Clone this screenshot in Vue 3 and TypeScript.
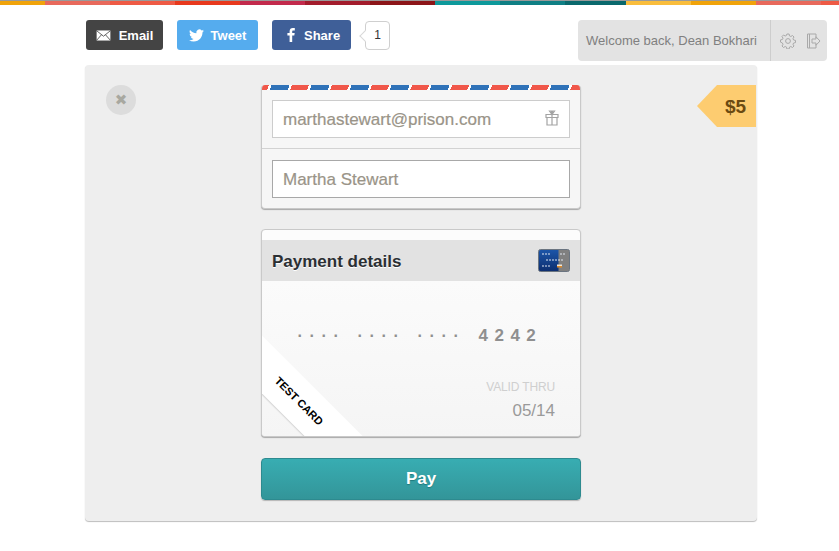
<script setup lang="ts">
const stripes = [
  { color: '#f0a30a', width: 45 },
  { color: '#e8695c', width: 65 },
  { color: '#ee5a45', width: 65 },
  { color: '#e8391d', width: 65 },
  { color: '#c22a4c', width: 65 },
  { color: '#a31c2c', width: 65 },
  { color: '#8c1518', width: 65 },
  { color: '#0e999b', width: 65 },
  { color: '#0f7f84', width: 65 },
  { color: '#0a686c', width: 61 },
  { color: '#f9bd3c', width: 65 },
  { color: '#f0a30a', width: 65 },
  { color: '#e8695c', width: 65 },
  { color: '#ee5a45', width: 18 }
]
const blocks = ['····', '····', '····']
</script>

<template>
  <div class="page">
    <div class="rainbow">
      <span v-for="(s, i) in stripes" :key="i" :style="{ background: s.color, width: s.width + 'px' }"></span>
    </div>

    <header class="top">
      <div class="social">
        <a class="btn email">
          <svg width="15" height="11" viewBox="0 0 16 12">
            <path d="M0.5 0.5h15v11h-15z" fill="#fff" />
            <path d="M0.5 0.8L8 6.8l7.5-6M0.5 11.2L5.8 5.2M15.5 11.2L10.2 5.2" fill="none" stroke="#444" stroke-width="0.9" />
          </svg>
          Email
        </a>
        <a class="btn tweet">
          <svg width="15" height="15" viewBox="0 0 24 24">
            <path fill="#fff" d="M23.95 4.57a10 10 0 0 1-2.82.77 4.96 4.96 0 0 0 2.16-2.72c-.95.55-2 .96-3.12 1.19a4.92 4.92 0 0 0-8.38 4.48C7.69 8.1 4.07 6.13 1.64 3.16a4.82 4.82 0 0 0-.67 2.48c0 1.71.87 3.21 2.19 4.1a4.9 4.9 0 0 1-2.23-.62v.06a4.92 4.92 0 0 0 3.95 4.83 5 5 0 0 1-2.21.08 4.94 4.94 0 0 0 4.6 3.42A9.87 9.87 0 0 1 0 19.54a14 14 0 0 0 7.56 2.21c9.05 0 14-7.5 14-13.98 0-.21 0-.42-.02-.63a9.94 9.94 0 0 0 2.41-2.57z" />
          </svg>
          Tweet
        </a>
        <a class="btn share">
          <svg width="8" height="14" viewBox="0 0 8 14">
            <path fill="#fff" d="M5.2 14V7.6h2.1l.4-2.500H5.2V3.600c0-.7.2-1.200 1.200-1.200h1.400V.1C7.5.1 6.700 0 5.800 0 3.900 0 2.600 1.200 2.600 3.300v1.800H.4v2.500h2.200V14z" />
          </svg>
          Share
        </a>
        <span class="count">1</span>
      </div>

      <div class="account">
        <span class="welcome">Welcome back, Dean Bokhari</span>
        <span class="actions">
          <svg width="16" height="16" viewBox="0 0 16 16" fill="none" stroke="#a9a9a9" stroke-width="1">
            <path d="M6.900 1h2.200l.4 1.900 1.300.6 1.700-1 1.500 1.500-1 1.700.6 1.300 1.900.4v2.200l-1.900.4-.6 1.300 1 1.700-1.500 1.500-1.700-1-1.300.6-.4 1.900H6.900l-.4-1.900-1.300-.6-1.700 1-1.500-1.500 1-1.700-.6-1.300L.5 9.100V6.900l1.900-.4.600-1.300-1-1.700 1.500-1.500 1.700 1 1.300-.6z" />
            <circle cx="8" cy="8" r="2.400" />
          </svg>
          <svg width="15" height="16" viewBox="0 0 15 16" fill="none" stroke="#a9a9a9" stroke-width="1">
            <path d="M10 5V1H1.500v14H10v-4M3.500 1v14" />
            <path d="M6 6h4V3.800L14 8l-4 4.200V10H6z" />
          </svg>
        </span>
      </div>
    </header>

    <main class="panel">
      <span class="close">&#10006;</span>
      <span class="price">$5</span>

      <section class="card contact">
        <div class="airmail"></div>
        <div class="contact-row first">
          <div class="field">
            <span>marthastewart@prison.com</span>
            <svg width="14" height="16" viewBox="0 0 14 16" fill="none" stroke="#a3a3a3" stroke-width="1.200">
              <path d="M1 4.500h12v3H1zM2 7.500h10V15H2zM7 4.500V15" />
              <path d="M7 4.500L4.500 1h2L7 4.500 7.500 1h2z" />
            </svg>
          </div>
        </div>
        <div class="contact-row">
          <div class="field dark"><span>Martha Stewart</span></div>
        </div>
      </section>

      <section class="card payment">
        <h2 class="pay-head">
          <span>Payment details</span>
          <svg width="32" height="23" viewBox="0 0 32 23">
            <defs>
              <linearGradient id="cardBlue" x1="0" y1="0" x2="0" y2="1">
                <stop offset="0" stop-color="#1c55a8" />
                <stop offset="1" stop-color="#0e2f70" />
              </linearGradient>
            </defs>
            <rect x="0.500" y="0.500" width="31" height="22" rx="2" fill="#808080" stroke="#6a7480" />
            <path d="M2.500 1h18v21h-18a1.500 1.500 0 0 1-1.500-1.500v-18A1.500 1.500 0 0 1 2.500 1z" fill="url(#cardBlue)" />
            <path d="M4 5h2M7 5h2M10 5h2M22 5h2M25 5h2M8 11h2M11 11h2M14 11h2M17 11h2M20 11h2M23 11h2M4 17h2M7 17h2M10 17h2" stroke="#dfe6f0" stroke-width="1.200" fill="none" />
            <rect x="19" y="15.500" width="5" height="1.500" fill="#f0e7d8" />
            <rect x="19" y="17" width="5" height="1.500" fill="#e08a28" />
          </svg>
        </h2>
        <div class="pay-body">
          <div class="number">
            <span v-for="(b, i) in blocks" :key="i" class="dots">{{ b }}</span>
            <b>4242</b>
          </div>
          <div class="valid">
            <small>VALID THRU</small>
            <span>05/14</span>
          </div>
          <div class="ribbon"><span>TEST CARD</span></div>
        </div>
      </section>

      <button class="pay">Pay</button>
    </main>
  </div>
</template>

<style scoped>
.page {
  width: 839px;
  height: 551px;
  overflow: hidden;
  font-family: "Liberation Sans", Arial, sans-serif;
  background: #fff;
}

.rainbow {
  display: flex;
  height: 5px;
  border-top: 1px solid #9a9a9a;
  box-sizing: border-box;
}
.rainbow span {
  flex: none;
  height: 4px;
}

.top {
  display: flex;
  justify-content: space-between;
  align-items: flex-start;
  height: 60px;
  padding: 15px 12px 0 86px;
  box-sizing: border-box;
}
.social {
  display: flex;
  align-items: center;
}
.btn {
  display: flex;
  align-items: center;
  justify-content: center;
  gap: 7px;
  height: 30px;
  border-radius: 3px;
  color: #fff;
  font-size: 13px;
  font-weight: bold;
  margin-right: 14px;
}
.email { width: 77px; background: #444444; gap: 8px; }
.tweet { width: 81px; background: #55acee; }
.share {
  width: 79px;
  background: #3f5f98;
  gap: 9px;
  justify-content: flex-start;
  padding-left: 15px;
  box-sizing: border-box;
}
.count {
  position: relative;
  width: 25px;
  height: 29px;
  box-sizing: border-box;
  border: 1px solid #cfcfcf;
  border-radius: 4px;
  background: #fff;
  color: #333;
  font-size: 12px;
  line-height: 27px;
  text-align: center;
}
.count::before {
  content: "";
  position: absolute;
  left: -5px;
  top: 10px;
  width: 7px;
  height: 7px;
  background: #fff;
  border-left: 1px solid #d8d8d8;
  border-bottom: 1px solid #d8d8d8;
  transform: rotate(45deg);
}

.account {
  display: flex;
  width: 249px;
  height: 41px;
  background: #e3e3e3;
  border-radius: 4px;
  color: #808080;
  font-size: 13px;
  line-height: 41px;
}
.welcome {
  width: 193px;
  padding-left: 8px;
  box-sizing: border-box;
  border-right: 1px solid #cdcdcd;
  white-space: nowrap;
}
.actions {
  display: flex;
  align-items: center;
  gap: 10px;
  padding-left: 9px;
}

.panel {
  position: relative;
  display: flex;
  flex-direction: column;
  align-items: center;
  width: 672px;
  height: 456px;
  margin-left: 85px;
  padding-top: 20px;
  box-sizing: border-box;
  background: #eeeeee;
  border-radius: 4px;
  box-shadow: 0 1px 1px #bdbdbd;
}
.close {
  position: absolute;
  left: 21px;
  top: 20px;
  width: 30px;
  height: 30px;
  border-radius: 50%;
  background: #dcdcdc;
  color: #a8a8a0;
  font-family: "DejaVu Sans", sans-serif;
  font-size: 15px;
  line-height: 30px;
  text-align: center;
}
.price {
  position: absolute;
  right: 1px;
  top: 20px;
  width: 59px;
  height: 42px;
  padding-left: 28px;
  box-sizing: border-box;
  background: #fdcc70;
  clip-path: polygon(20px 0, 100% 0, 100% 100%, 20px 100%, 0 50%);
  color: #6b4a12;
  font-size: 19px;
  font-weight: bold;
  line-height: 44px;
}

.card {
  width: 320px;
  box-sizing: border-box;
  border: 1px solid #c9c9c9;
  border-radius: 4px;
  box-shadow: 0 1px 1px #a8a8a8;
  overflow: hidden;
}

.contact {
  height: 124px;
  background: #f6f6f6;
  border-top: none;
}
.airmail {
  height: 5px;
  background: repeating-linear-gradient(
    110deg,
    #f0574a -9.400px 6.600px,
    #fff 6.600px 9px,
    #2f72b8 9px 25.800px,
    #fff 25.800px 28.200px
  );
}
.contact-row {
  padding: 11px 10px 10px;
}
.contact-row.first {
  padding: 10px 10px 10px;
  border-bottom: 1px solid #d2d2d2;
}
.field {
  display: flex;
  align-items: center;
  justify-content: space-between;
  height: 38px;
  padding: 0 10px;
  box-sizing: border-box;
  background: #fff;
  border: 1px solid #cccccc;
  color: #9a9488;
  font-size: 17px;
  -webkit-text-stroke: 0.2px #9a9488;
}
.field span {
  padding-top: 2px;
}
.field svg {
  margin-top: -2px;
}
.field.dark {
  border-color: #a8a8a8;
}

.payment {
  height: 208px;
  margin-top: 20px;
  padding-top: 10px;
  background: #fcfcfc;
}
.pay-head {
  display: flex;
  align-items: center;
  justify-content: space-between;
  height: 41px;
  margin: 0;
  padding: 0 10px;
  background: #e2e2e2;
  color: #2b2f33;
  font-size: 17px;
  font-weight: bold;
  text-shadow: 0 1px 0 #fff;
}
.pay-head span {
  padding-top: 2px;
}
.pay-body {
  position: relative;
  height: 155px;
  background: linear-gradient(#fbfbfb, #f5f5f5);
  overflow: hidden;
}
.number {
  display: flex;
  align-items: center;
  height: 20px;
  margin-top: 45px;
  padding-left: 35.500px;
  color: #8f8f8f;
}
.dots {
  width: 60px;
  font-size: 16px;
  font-weight: bold;
  letter-spacing: 6.670px;
  color: #8f8f8f;
}
.number b {
  margin-left: 1px;
  font-size: 17px;
  letter-spacing: 6.500px;
}
.valid {
  display: flex;
  flex-direction: column;
  align-items: flex-end;
  margin: 34px 25px 0 0;
}
.valid small {
  color: #cfcfcf;
  font-size: 12px;
  letter-spacing: -0.150px;
}
.valid span {
  margin-top: 7px;
  color: #9a9a9a;
  font-size: 17px;
}
.ribbon {
  position: absolute;
  left: -66px;
  top: 97px;
  width: 200px;
  height: 41px;
  padding-left: 8px;
  box-sizing: border-box;
  background: #fff;
  box-shadow: 0 1px 1px #d4d4d4;
  color: #000;
  font-size: 11px;
  font-weight: bold;
  line-height: 41px;
  text-align: center;
  transform: rotate(45deg);
}

.pay {
  width: 320px;
  height: 42px;
  margin-top: 21px;
  border: 1px solid #2d8a8f;
  border-radius: 4px;
  background: linear-gradient(#38adb2, #339599);
  box-shadow: 0 1px 1px #b5b5b5;
  color: #fff;
  font-family: inherit;
  font-size: 17px;
  font-weight: bold;
  text-shadow: 0 1px 1px #1f7a7e;
}
</style>
